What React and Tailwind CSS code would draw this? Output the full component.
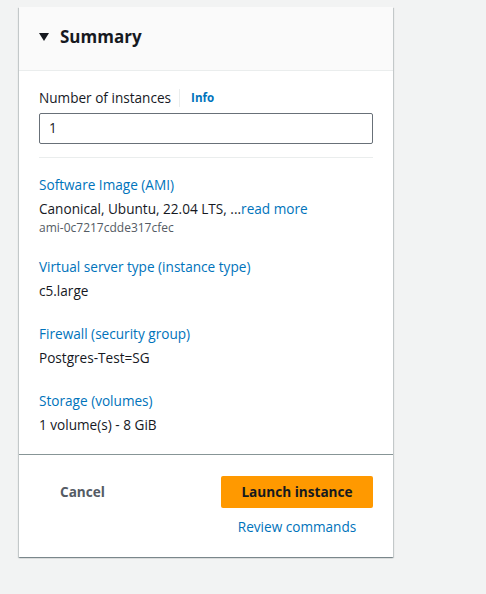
import React from 'react';

const DETAILS = [
  { label: 'Software Image (AMI)', value: 'Canonical, Ubuntu, 22.04 LTS, ...', more: true, sub: 'ami-0c7217cdde317cfec' },
  { label: 'Virtual server type (instance type)', value: 'c5.large' },
  { label: 'Firewall (security group)', value: 'Postgres-Test=SG' },
  { label: 'Storage (volumes)', value: '1 volume(s) - 8 GiB' },
];

export default function App() {
  return (
    <div
      className="min-h-[594px] bg-[#f2f3f3] pt-[7px] pl-[19px]"
      style={{ fontFamily: '"Open Sans", "Noto Sans", Arial, sans-serif' }}
    >
      <div className="w-[374px] bg-white shadow-[0_1px_1px_0_rgba(0,28,36,0.3),1px_1px_1px_0_rgba(0,28,36,0.15),-1px_1px_1px_0_rgba(0,28,36,0.15)]">
        {/* header */}
        <div className="flex h-[64px] items-center gap-[11px] border-b border-[#eaeded] bg-[#fafafa] pb-[4px] pl-[20px]">
          <svg width="10" height="8" viewBox="0 0 10 8">
            <path d="M0 0h10L5 8z" fill="#16191f" />
          </svg>
          <h2 className="text-[17px] font-bold text-[#16191f]">Summary</h2>
        </div>

        {/* body */}
        <div className="px-[20px] pt-[18px] pb-[18px]">
          <div className="flex h-[18px] items-center">
            <span className="text-[13.6px] text-[#16191f]">Number of instances</span>
            <span className="ml-[8px] mr-[11px] h-[18px] w-px bg-[#eaeded]" />
            <span className="text-[11.6px] font-bold text-[#0073bb]">Info</span>
          </div>
          <div className="mt-[6px] flex h-[31px] items-center rounded-[2px] border border-[#687078] px-[9px] text-[13.6px] text-[#16191f]">
            1
          </div>
          <div className="mt-[13px] h-px bg-[#eaeded]" />

          <div className="mt-[16px] flex flex-col gap-[21px]">
            {DETAILS.map((d) => (
              <div key={d.label}>
                <div className="text-[13.6px] leading-[22px] text-[#0073bb]">{d.label}</div>
                <div className="mt-[2px] text-[13.6px] leading-[22px] text-[#16191f]">
                  {d.value}
                  {d.more && <span className="text-[#0073bb]">read more</span>}
                </div>
                {d.sub && (
                  <div className="text-[12px] leading-[15px] text-[#545b64]">{d.sub}</div>
                )}
              </div>
            ))}
          </div>
        </div>

        {/* footer */}
        <div className="flex justify-between border-t border-[#879596] pt-[21px] pb-[19px] pl-[41px] pr-[20px]">
          <button className="h-[32px] text-[13.6px] font-bold text-[#545b64]">Cancel</button>
          <div className="flex flex-col items-center">
            <button className="h-[32px] w-[152px] rounded-[2px] bg-[#ff9900] text-[13.6px] font-bold text-[#16191f]">
              Launch instance
            </button>
            <span className="mt-[8px] text-[13.6px] leading-[22px] text-[#0073bb]">Review commands</span>
          </div>
        </div>
      </div>
    </div>
  );
}
